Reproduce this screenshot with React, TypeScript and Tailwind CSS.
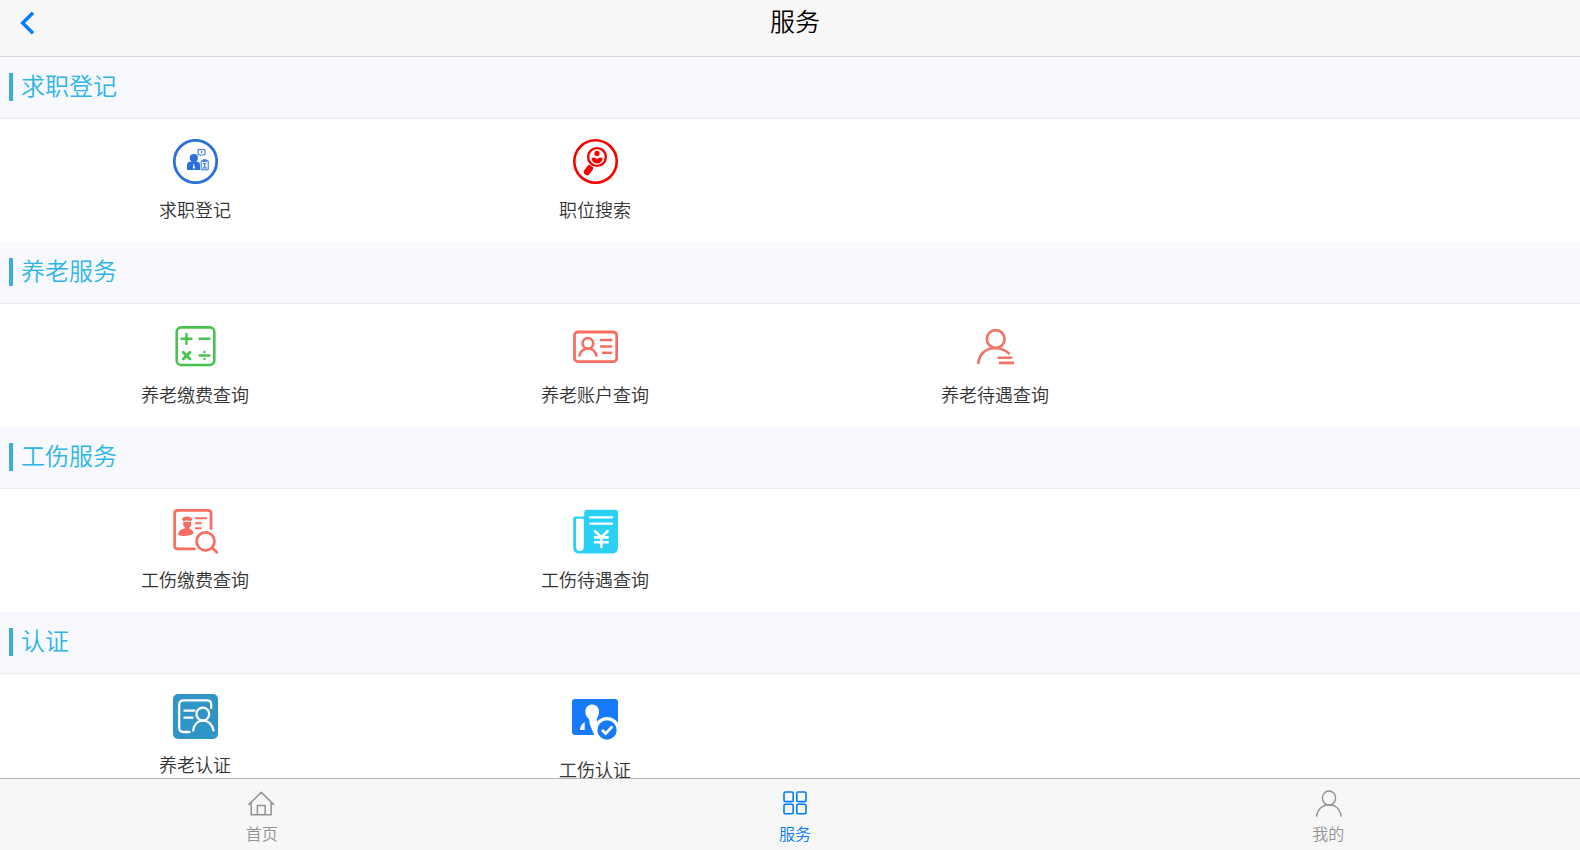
import { useState } from "react";
import type { ReactNode } from "react";

interface ServiceItem {
  name: string;
  icon: ReactNode;
}

interface ServiceGroup {
  title: string;
  items: ServiceItem[];
}

/* 求职登记 */
const JobRegisterIcon = () => (
  <svg width="45" height="45" viewBox="0 0 45 45" fill="none">
    <circle cx="22.5" cy="22.5" r="21.2" stroke="#2b6fdc" strokeWidth="2.8" />
    <g fill="#2b6fdc">
      <circle cx="20.8" cy="19" r="4.1" />
      <path d="M14 31v-4.6c0-2.4 1.6-3.8 3.8-3.8h5.8c2.2 0 3.4 1.4 3.4 3.4v5z" />
    </g>
    <path d="M20.8 24l-1 4.8 1 1.4 1-1.4z" fill="#fff" />
    <path d="M28.2 21.8h7v9h-7z M30 20.8h3.4v1.6H30z M30 24.8h3.4 M31.7 24.8v2.4 M29.8 29l1.9-1.8 1.9 1.8z" stroke="#2b6fdc" strokeWidth="1" />
    <path d="M25 10.6h7v5.2h-2.6l-1.2 1.2-.6-1.2H25z M28.5 12v2.4" stroke="#2b6fdc" strokeWidth="1" />
  </svg>
);

/* 职位搜索 */
const JobSearchIcon = () => (
  <svg width="45" height="45" viewBox="0 0 45 45" fill="none">
    <circle cx="22.5" cy="22.5" r="21.2" stroke="#f80000" strokeWidth="2.6" />
    <circle cx="24" cy="18" r="8.9" stroke="#f80000" strokeWidth="2.4" />
    <circle cx="24" cy="14.4" r="2.6" fill="#f80000" />
    <path d="M18.6 19.2c2-1.4 3.4-.6 5.4.8 2-1.4 3.6-2.2 5.6-.8-.2 3.2-2.4 5.2-5.6 5.2s-5.2-2-5.4-5.2z" fill="#f80000" />
    <path d="M17 29l-3 4" stroke="#f80000" strokeWidth="6.4" strokeLinecap="round" />
    <path d="M14.6 24l7 5" stroke="#fff" strokeWidth="1" />
  </svg>
);

/* 养老缴费查询 */
const CalculatorIcon = () => (
  <svg width="45" height="45" viewBox="0 0 45 45" fill="none" stroke="#45c34c" strokeLinecap="round">
    <rect x="3.7" y="3.4" width="37.6" height="37.6" rx="4.5" strokeWidth="2.6" />
    <path d="M8.6 14.8h9.8 M13.5 9.9v9.8 M26.6 14.8h9.8 M26.6 31.5h9.8" strokeWidth="2.4" />
    <path d="M10.2 28.3l6.8 6.8 M17 28.3l-6.8 6.8" strokeWidth="2.8" />
    <path d="M31.5 28v.1 M31.5 35v.1" strokeWidth="2.4" />
  </svg>
);

/* 养老账户查询 */
const AccountCardIcon = () => (
  <svg width="45" height="45" viewBox="0 0 45 45" fill="none" stroke="#f66e62" strokeWidth="2.5" strokeLinecap="round">
    <rect x="1.5" y="8" width="42.2" height="29.6" rx="3.4" strokeWidth="2.8" />
    <circle cx="14.9" cy="19.4" r="5.4" />
    <path d="M6.4 31.6c1.2-4.2 4.4-7 8.5-7s7.4 2.8 8.6 7 M28 16h10.2 M28 22.4h10.2 M30 28.8h8.2" />
  </svg>
);

/* 养老待遇查询 */
const PersonLinesIcon = () => (
  <svg width="45" height="45" viewBox="0 0 45 45" fill="none" stroke="#ee7466" strokeWidth="2.6">
    <circle cx="22.7" cy="15" r="8.9" />
    <path d="M5.3 40C5.7 31 12 24.3 21.3 24.3c6.200 0 11.600 1.800 15.200 5.800 M24.600 33.700h14.700 M26 38.900h15" />
  </svg>
);

/* 工伤缴费查询 */
const InjurySearchIcon = () => (
  <svg width="45" height="45" viewBox="0 0 45 45" fill="none">
    <g stroke="#f96c60" strokeWidth="2.7" strokeLinecap="round">
      <path d="M38 19.600V4.400c0-2-1.100-3.100-3.100-3.100H4.700c-2 0-3.100 1.100-3.100 3.100v32.400c0 2 1.100 3.100 3.100 3.100h16.800" />
      <circle cx="32.5" cy="32.3" r="9" />
      <path d="M39.2 38.8l4.6 4.6" />
      <path d="M22.8 9.3h10.5 M22.8 14.3h5 M22.8 19.2h5" strokeWidth="2" />
    </g>
    <g fill="#f96c60">
      <path d="M9 10.2c.4-1.8 2.6-2.7 5.2-2.7s4.8.9 5 2.7l-1.200 2c-2.600-.8-5-.8-7.600 0z" />
      <path d="M10.2 13.2c2.6-.6 5.2-.6 7.8 0v2.600c0 1.200-.6 2.200-1.500 3v1c2.700.8 4.200 2.200 3.900 5-3.600 2.400-11 2.800-15.200 1.200-.3-3.800 2.800-5.800 6.800-6.400v-1c-1.200-.8-1.800-1.800-1.800-3z" />
    </g>
  </svg>
);

/* 工伤待遇查询 */
const BenefitBillIcon = () => (
  <svg width="45" height="45" viewBox="0 0 45 45" fill="none">
    <path d="M11.200 7.400V3.200c0-1.600.9-2.500 2.500-2.500h28.800c1.600 0 2.500.9 2.500 2.500v35.600c0 3.400-2.400 5.800-5.800 5.800H6c-3.400 0-5.800-2.400-5.800-5.800V10c0-1.600 1-2.600 2.600-2.600z" fill="#2ad1f5" />
    <path d="M4.200 9.700h6.600v28.400c0 2.500-1.600 4-3.900 4s-3.900-1.500-3.900-4V10.900c0-.8.400-1.200 1.200-1.200z" fill="#fff" />
    <path d="M17.200 8.400h21.900 M17.200 14.700h21.900" stroke="#fff" strokeWidth="2.2" strokeLinecap="round" />
    <path d="M22 22.200l6.300 6 6.300-6 M28.300 28.400V38 M22 28.400h12.600 M22 33.200h12.600" stroke="#fff" strokeWidth="2.6" strokeLinecap="round" />
  </svg>
);

/* 养老认证 */
const PensionAuthIcon = () => (
  <svg width="45" height="45" viewBox="0 0 45 45" fill="none">
    <rect width="45" height="45" rx="5" fill="#3094c6" />
    <g stroke="#fff" strokeWidth="2.3" strokeLinecap="round">
      <path d="M38.200 14V10.600c0-2.600-1.600-4.200-4.200-4.200H10.400C7.800 6.400 6.200 8 6.200 10.600v23.200c0 2.600 1.600 4.200 4.200 4.200h6.200" />
      <path d="M11.4 16.7h10 M11.4 23.7h8" />
      <circle cx="29.8" cy="20" r="6.4" />
      <path d="M20.2 36.4c.8-5.8 4.6-9.800 9.900-9.800s9.400 4 10.400 9.800" />
    </g>
  </svg>
);

/* 工伤认证 */
const InjuryAuthIcon = () => (
  <svg width="46" height="50" viewBox="0 0 46 50" fill="none">
    <rect y="5" width="46" height="36" rx="3" fill="#1779fb" />
    <path d="M20 10.400c4.300 0 7.100 2.800 7 7.600-.1 3-1 5-2.200 6.800-.5 2 .2 3.600 2 4.600l-1 11.600h-3.600L17.800 30.400c-.6-1.600.2-3.600-.8-5.200-2.100-1.800-3.600-4.400-3.600-7.400 0-4.600 2.600-7.400 6.600-7.400z" fill="#fff" />
    <path d="M12.700 28v8H8c.2-3.600 1.600-6.400 4.700-8z" fill="#fff" />
    <path d="M46 29.300V43H24.200a13 13 0 0 1 21.800-13.700z" fill="#fff" />
    <circle cx="35" cy="36" r="13" fill="#fff" />
    <circle cx="35" cy="36" r="9.7" fill="#1779fb" />
    <path d="M30 36l3.600 3.600 6.800-7.200" stroke="#fff" strokeWidth="2.8" />
  </svg>
);

const HomeIcon = () => (
  <svg width="27" height="27" viewBox="0 0 27 27" fill="none" stroke="currentColor" strokeWidth="1.5" strokeLinejoin="round" strokeLinecap="round">
    <path d="M1 14.4L13.3 2.2l12.2 12.2 M3.2 12.6v12.2h20V12.6 M9.4 24.6v-9.2h7.8v9.2" />
  </svg>
);

const GridIcon = () => (
  <svg width="27" height="27" viewBox="0 0 27 27" fill="none" stroke="currentColor" strokeWidth="1.6">
    <rect x="3" y="2" width="9.2" height="9.6" rx="1.4" />
    <rect x="15.8" y="2" width="9.2" height="9.6" rx="1.4" />
    <rect x="3" y="14.2" width="9.2" height="9.6" rx="1.4" />
    <rect x="15.8" y="14.2" width="9.2" height="9.6" rx="1.4" />
  </svg>
);

const MineIcon = () => (
  <svg width="27" height="27" viewBox="0 0 27 27" fill="none" stroke="currentColor" strokeWidth="1.4" strokeLinecap="round">
    <ellipse cx="14" cy="8" rx="6.6" ry="7" />
    <path d="M1.6 26.2c.8-6.8 5.6-11.4 12.400-11.400s11.200 4.600 12 11.400" />
  </svg>
);

const groups: ServiceGroup[] = [
  {
    title: "求职登记",
    items: [
      { name: "求职登记", icon: <JobRegisterIcon /> },
      { name: "职位搜索", icon: <JobSearchIcon /> },
    ],
  },
  {
    title: "养老服务",
    items: [
      { name: "养老缴费查询", icon: <CalculatorIcon /> },
      { name: "养老账户查询", icon: <AccountCardIcon /> },
      { name: "养老待遇查询", icon: <PersonLinesIcon /> },
    ],
  },
  {
    title: "工伤服务",
    items: [
      { name: "工伤缴费查询", icon: <InjurySearchIcon /> },
      { name: "工伤待遇查询", icon: <BenefitBillIcon /> },
    ],
  },
  {
    title: "认证",
    items: [
      { name: "养老认证", icon: <PensionAuthIcon /> },
      { name: "工伤认证", icon: <InjuryAuthIcon /> },
    ],
  },
];

const tabs = [
  { name: "首页", icon: <HomeIcon /> },
  { name: "服务", icon: <GridIcon /> },
  { name: "我的", icon: <MineIcon /> },
];

export default function App() {
  const [active, setActive] = useState("服务");

  return (
    <div className="h-screen overflow-hidden bg-white font-['Noto_Sans_CJK_SC',sans-serif] font-[350]">
      <div className="-ml-[5px] -mr-[15px] flex h-full flex-col">
        {/* 顶部导航 */}
        <header className="grid h-[57px] shrink-0 grid-cols-[1fr_auto_1fr] items-start border-b border-[#d5d5d9] bg-[#f7f7f7]">
          <button aria-label="返回" className="ml-6 mt-2.5 w-6 text-[#007aff]">
            <svg width="16" height="26" viewBox="0 0 16 26" fill="none" stroke="currentColor" strokeWidth="3.4">
              <path d="M14 2.8L3.6 13 14 23.2" />
            </svg>
          </button>
          <h1 className="text-[25px] leading-10 font-[350] text-black">服务</h1>
        </header>

        {/* 服务列表 */}
        <main className="min-h-0 flex-1 overflow-y-auto [scrollbar-width:none]">
          {groups.map((group) => (
            <section key={group.title}>
              <div className="flex h-[62px] items-start gap-2 border-b border-[#ebebef] bg-[#f8f9fe] pl-3.5 pt-4">
                <span className="h-7 w-1 bg-[#3bafda]" />
                <h2 className="text-2xl leading-6 font-[350] text-[#2cb5e8]">{group.title}</h2>
              </div>
              <div className="grid grid-cols-4">
                {group.items.map((item) => (
                  <a key={item.name} href="#" className="flex flex-col items-center pb-5 pt-5">
                    {item.icon}
                    <span className="mt-3 text-lg leading-[26px] text-[#333]">{item.name}</span>
                  </a>
                ))}
              </div>
            </section>
          ))}
        </main>

        {/* 底部标签栏 */}
        <nav className="grid h-[72px] shrink-0 grid-cols-3 border-t border-[#b5b5b5] bg-[#f7f7f7]">
          {tabs.map((tab) => (
            <button
              key={tab.name}
              onClick={() => setActive(tab.name)}
              className={`flex flex-col items-center pt-[11px] ${active === tab.name ? "text-[#007aff]" : "text-[#929292]"}`}
            >
              {tab.icon}
              <span className="mt-1 text-base leading-6">{tab.name}</span>
            </button>
          ))}
        </nav>
      </div>
    </div>
  );
}
